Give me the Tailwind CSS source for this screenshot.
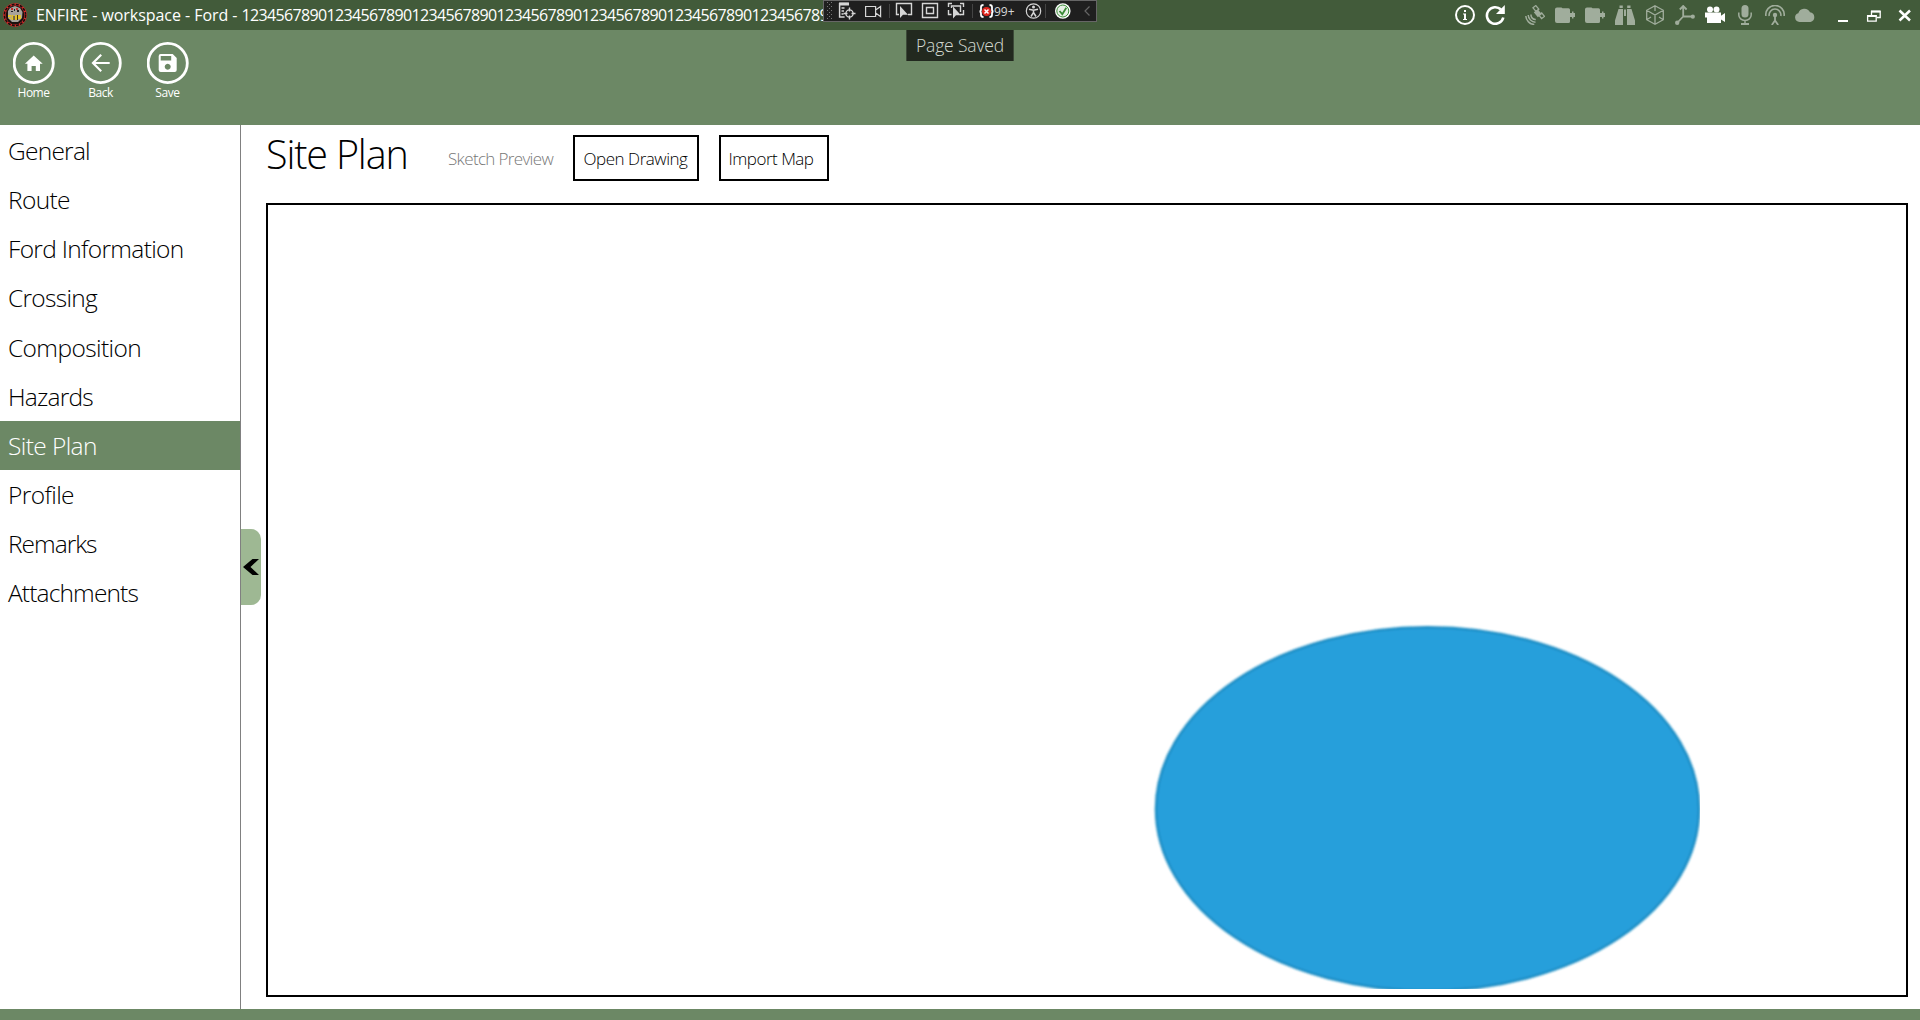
<!DOCTYPE html>
<html lang="en">
<head>
<meta charset="utf-8">
<title>ENFIRE</title>
<script src="https://cdn.jsdelivr.net/npm/@tailwindcss/browser@4"></script>
</head>
<body class="relative flex h-screen w-screen flex-col overflow-hidden bg-white font-['Open_Sans',sans-serif] font-light text-black">

<!-- Title bar -->
<header class="flex h-[30px] shrink-0 items-center bg-[#425b3a] text-white">
  <svg class="ml-[3px] size-6 shrink-0" viewBox="0 0 24 24">
    <circle cx="12" cy="12" r="11.8" fill="#e32a2a"/>
    <circle cx="12" cy="12" r="10.6" fill="none" stroke="#17100f" stroke-width="1.6" stroke-dasharray="3 1.2"/>
    <circle cx="12" cy="12" r="9.4" fill="#1b1210"/>
    <path d="M5 8l2-3 5-2 5 2 2.500 4-.5 6-4 4H9l-4-4z" fill="#a7a39b"/>
    <path d="M8 5h2v2H8zM13 5h2v2h-2z" fill="#c03030"/>
    <path d="M11 6h1v2h-1zM14 7h2v2h-2zM8 8h2v1H8z" fill="#222"/>
    <path d="M5 12h3v2H5zM8.500 12h2v5h-2zM12 12h2v5h-2zM15 12h3v4h-3zM6 15h2v1H6z" fill="#e3c32c"/>
    <path d="M10.500 13h1v4h-1zM14 12h1v5h-1z" fill="#40300c"/>
  </svg>
  <div class="ml-[9px] flex w-[788px] shrink-0 overflow-hidden text-base leading-[32px] font-normal whitespace-pre"><span class="tracking-[-0.05px]">ENFIRE - workspace - Ford - </span><span class="tracking-[-0.65px]">1234567890123456789012345678901234567890123456789012345678901234567890</span></div>
  <div class="ml-auto -mr-px flex shrink-0 items-center">
    <div class="flex *:mx-[5px] *:size-5">
      <svg viewBox="0 0 20 20"><circle cx="10" cy="10" r="9" fill="none" stroke="#fff" stroke-width="2"/><path d="M9 5h2v2H9zM8 8.500h3V14h1v1H8v-1h1V9.500H8z" fill="#fff"/></svg>
      <svg viewBox="0 0 20 20"><path d="M16 4.500A8.300 8.300 0 1 0 18.300 12.500" fill="none" stroke="#fff" stroke-width="2.600"/><path d="M19.800 0v9H11z" fill="#fff"/></svg>
    </div>
    <div class="ml-2.5 flex text-[#a0ad9c] *:mx-[5px] *:size-5">
      <svg viewBox="0 0 20 20" fill="none" stroke="currentColor"><path d="M8 2.800L10.800.6l3 3.600L11 6.400zM13.800 10l2.900-2.200 2.800 3.600-2.900 2.200z" stroke-width="1.300"/><path d="M12.800 4.300l4 5-4 3-4-5z" fill="currentColor" stroke="none"/><path d="M6 9.500a4.500 4.500 0 0 0 4.800 5M3.200 10a7.500 7.500 0 0 0 7.300 7.200M.8 11a9 9 0 0 0 8.500 8.500" stroke-width="1.500"/></svg>
      <svg viewBox="0 0 20 20" fill="currentColor"><path d="M2 2.500h4.500l1 .7H13.500q1.500 0 1.500 1.500V8h2V6.500h1.500V8H20v4h-1.500v1.500H17V12h-2v4.500q0 1.500-1.500 1.500H2Q0 18 0 16V4.200Q0 2.500 2 2.500z"/></svg>
      <svg viewBox="0 0 20 20" fill="currentColor"><path d="M2 2.500h4.500l1 .7H13.500q1.500 0 1.500 1.500V8h2V6.500h1.500V8H20v4h-1.500v1.500H17V12h-2v4.500q0 1.500-1.500 1.500H2Q0 18 0 16V4.200Q0 2.500 2 2.500z"/></svg>
      <svg viewBox="0 0 20 20" fill="currentColor"><path d="M4.500.5h3.300V3H4.500zM12.200.5h3.300V3h-3.300zM3.500 4H8v16H0v-4.500zM12 4h4.500L20 15.500V20h-8zM9 4.500h2V11H9z"/></svg>
      <svg viewBox="0 0 20 20" fill="none" stroke="currentColor" stroke-width="1.300"><path d="M10 .8l8.300 4.500v9.400L10 19.200 1.700 14.700V5.300zM10 .8V6M1.700 5.300L10 10l8.300-4.700M10 10v9M1.700 14.700L6 12M18.300 14.700L14 12"/></svg>
      <svg viewBox="0 0 20 20" fill="none" stroke="currentColor" stroke-width="1.800"><path d="M8.200 1v10.500H17M8.200 11.500L3 17M4.800 4.500L8.200 1l3.400 3.500"/><circle cx="17.800" cy="11.700" r="2.100" fill="currentColor" stroke="none"/><circle cx="2.200" cy="17.800" r="2.200" fill="currentColor" stroke="none"/></svg>
      <svg viewBox="0 0 20 20" fill="#fff"><circle cx="5" cy="4.500" r="3"/><circle cx="11.500" cy="4.500" r="3"/><path d="M0 7.500h16v3.200L20 8v9l-4-2.500V18H2v-5.500H0z"/></svg>
      <svg viewBox="0 0 20 20" fill="currentColor"><rect x="6.500" y="0" width="7" height="12.500" rx="3.500"/><path d="M3.800 7.500V10a6.200 5.500 0 0 0 12.400 0V7.500M10 15.500V19" fill="none" stroke="currentColor" stroke-width="1.500"/><path d="M6 18h8v2H6z"/></svg>
      <svg viewBox="0 0 20 20" fill="none" stroke="currentColor" stroke-width="1.600"><path d="M.9 11a9.200 9.200 0 1 1 18.200 0M4.200 11a5.900 5.900 0 1 1 11.600 0"/><path d="M10 10v5.500L6.800 20M10 15.500l3.200 4.500" stroke-width="1.800"/><circle cx="10" cy="10" r="2.200" fill="currentColor" stroke="none"/></svg>
      <svg viewBox="0 0 20 20" fill="currentColor"><path d="M4.500 17A4.500 4.500 0 0 1 3.300 8.200 6.300 6.300 0 0 1 15 7.200 5 5 0 0 1 15.500 17z"/></svg>
    </div>
    <div class="ml-2 flex *:size-[30px] *:mr-px">
      <svg viewBox="0 0 30 30"><path d="M10 20h10v2H10z" fill="#fff"/></svg>
      <svg viewBox="0 0 30 30" fill="none" stroke="#fff"><path d="M12.500 15v-3.500h8.700v6H18" stroke-width="1.300"/><path d="M12 11.600h9.500M8 16h9.500" stroke-width="2"/><path d="M8.600 15.700h8.600v5.500H8.600z" stroke-width="1.300"/></svg>
      <svg viewBox="0 0 30 30" fill="none" stroke="#fff"><path d="M9.500 10.500l10.500 10M20 10.500l-10.500 10" stroke-width="2.500"/></svg>
    </div>
  </div>
</header>

<!-- Command ribbon -->
<nav class="flex h-[95px] shrink-0 bg-[#6c8865] pt-3 text-xs font-normal text-white">
  <div class="flex w-[67px] flex-col items-center">
    <svg class="size-[42px]" viewBox="0 0 42 42"><circle cx="20.700" cy="21" r="19.600" fill="none" stroke="#fff" stroke-width="2.800"/><path d="M20.700 13.500l9 8.200H27V29h-4.200v-5h-4.200v5h-4.200v-7.300h-2.500z" fill="#fff"/></svg>
    <span class="leading-[18px] tracking-[-0.5px]">Home</span>
  </div>
  <div class="flex w-[67px] flex-col items-center">
    <svg class="size-[42px]" viewBox="0 0 42 42" fill="none" stroke="#fff"><circle cx="20.700" cy="21" r="19.600" stroke-width="2.800"/><path d="M29.700 21H13.200M21.200 12.800L13 21l8.200 8.200" stroke-width="2.200"/></svg>
    <span class="leading-[18px] tracking-[-0.5px]">Back</span>
  </div>
  <div class="flex w-[67px] flex-col items-center">
    <svg class="size-[42px]" viewBox="0 0 42 42"><circle cx="20.700" cy="21" r="19.600" fill="none" stroke="#fff" stroke-width="2.800"/><path fill-rule="evenodd" fill="#fff" d="M13.700 12h12l4 4v12q0 2-2 2h-14q-2 0-2-2V14q0-2 2-2zM13.700 14v4.500h10.500V14zM20.700 21.800a3 3 0 1 0 .01 0z"/></svg>
    <span class="leading-[18px] tracking-[-0.4px]">Save</span>
  </div>
</nav>

<main class="flex min-h-0 flex-1">
  <!-- Section list -->
  <ul class="flex w-[241px] shrink-0 flex-col border-r border-[#808080] pt-px text-[24.500px] leading-[50.5px] *:h-[49.17px] *:pl-2">
    <li class="tracking-[-0.75px]">General</li>
    <li class="tracking-[-0.65px]">Route</li>
    <li class="tracking-[-0.67px]">Ford Information</li>
    <li class="tracking-[-0.7px]">Crossing</li>
    <li class="tracking-[-0.6px]">Composition</li>
    <li class="tracking-[-0.8px]">Hazards</li>
    <li class="bg-[#6c8865] tracking-[-0.6px] text-white">Site Plan</li>
    <li class="tracking-[-0.6px]">Profile</li>
    <li class="tracking-[-1px]">Remarks</li>
    <li class="tracking-[-0.85px]">Attachments</li>
  </ul>

  <!-- Collapse handle -->
  <button class="mt-[404px] flex h-[75.5px] w-5 shrink-0 items-center justify-center self-start rounded-r-[10px] bg-[#9eb893]">
    <svg class="h-4 w-4" viewBox="0 0 16 16"><path d="M9.500 0H16L7.500 8l8.500 8H9.500L0 8z"/></svg>
  </button>

  <section class="ml-[5px] mr-3 flex flex-1 flex-col pb-3">
    <div class="flex h-[78px] shrink-0 items-start text-[17px]">
      <h1 class="w-[182px] text-[39.500px] leading-[59px] tracking-[-1.15px]">Site Plan</h1>
      <span class="mt-2.5 w-[125px] leading-[48px] tracking-[-0.65px] text-[#777]">Sketch Preview</span>
      <button class="mt-2.5 h-[46px] w-[126px] border-2 border-black pr-px leading-[44px] tracking-[-0.47px]">Open Drawing</button>
      <button class="mt-2.5 ml-5 h-[46px] w-[110px] border-2 border-black pr-1.5 leading-[44px] tracking-[-0.5px]">Import Map</button>
    </div>
    <!-- Sketch preview -->
    <div class="min-h-0 flex-1 border-2 border-black">
      <svg class="h-full w-full" viewBox="0 0 1638 790">
        <defs>
          <clipPath id="sheet"><rect x="0" y="0" width="1432" height="784"/></clipPath>
          <filter id="soft" x="-5%" y="-5%" width="110%" height="110%"><feGaussianBlur stdDeviation="1.1"/></filter>
        </defs>
        <g clip-path="url(#sheet)"><ellipse cx="1159.500" cy="604" rx="271.500" ry="181.800" fill="#259fdb" stroke="#1b8dc4" stroke-width="2.500" filter="url(#soft)"/></g>
      </svg>
    </div>
  </section>
</main>

<footer class="h-[11px] shrink-0 bg-[#6c8865]"></footer>

<!-- Docked debugging toolbar over the title bar -->
<div class="absolute top-0 left-[823px] flex h-[22px] w-[274px] items-center border border-[#666] bg-[#1f1f1f] text-[#d6d6d6]">
  <svg class="h-5 w-full" viewBox="824 1 272 20" fill="none" stroke="currentColor" stroke-width="1.200">
    <g stroke="#777" stroke-width="1" stroke-dasharray="1 3"><path d="M827.500 2v18M831.500 2v18"/><path d="M829.500 4v16"/></g>
    <path d="M839.500 3.500h9M839.600 3v14h5M841.500 8h3M841.500 11h2.500M841.500 14h2" stroke-width="1.500"/><path d="M839 4h10" stroke-width="3"/>
    <circle cx="849.500" cy="13.500" r="3.600" stroke-width="1.400"/><path d="M849.500 7.500v4M849.500 15.500v4M843.500 13.500h4M851.500 13.500h4" stroke-width="1.400"/>
    <path d="M865.600 6.500h10v10h-10zM875.600 10l5-3.500v10l-5-3.500"/>
    <path d="M889.500 4v14M972.500 4v14M1045.500 4v14" stroke="#444" stroke-width="1"/>
    <path d="M899 14.500h-2.500V3.500h15v11H908" stroke-width="1.400"/><path d="M900 6v12l3-3.200h5z" fill="currentColor" stroke="none"/>
    <path d="M922.500 3.500h15v14h-15zM926.500 7.500h7v6h-7z" stroke-width="1.400"/>
    <path d="M952 3.500h-3.500V7M960 3.500h3.500V7M948.500 10v4.500h3M963.500 10v4.500H960M951.500 8V6h9v6" stroke-width="1.400"/><path d="M953 6.500v12l3-3.200h5z" fill="currentColor" stroke="none"/>
    <path d="M983.500 5q-2.500 0-2.500 2v2.500q0 2-1.500 2 1.500 0 1.500 2V15q0 2 2.500 2M989.500 5q2.500 0 2.500 2v2.500q0 2 1.500 2-1.500 0-1.500 2V15q0 2-2.500 2" stroke="#fff" stroke-width="1.800"/>
    <circle cx="986.500" cy="11.500" r="4.500" fill="#e0251c" stroke="none"/><path d="M984.500 9.500l4 4M988.500 9.500l-4 4" stroke="#fff" stroke-width="1.500"/>
    <circle cx="1033.500" cy="11" r="7.200"/><circle cx="1033.500" cy="7" r="1.500" fill="currentColor" stroke="none"/><path d="M1029 9.300l4.500 1 4.500-1M1033.500 10v2.500l-2.500 4M1033.500 12.500l2.500 4" stroke-width="1.500"/>
    <circle cx="1062.800" cy="11" r="7.800" fill="#fff" stroke="none"/><circle cx="1062.800" cy="11" r="6" stroke="#388a34" stroke-width="1" fill="#e6f0e5"/><path d="M1059.500 11l2.800 3.200 4-6.500" stroke="#388a34" stroke-width="1.800"/>
    <path d="M1089.500 6.500l-4.500 4.500 4.500 4.500" stroke="#666"/>
  </svg>
  <span class="absolute top-[3px] left-[170px] text-xs leading-4 font-normal">99+</span>
</div>

<!-- Notification -->
<div class="absolute top-[30px] left-[906px] h-[31px] w-[108px] border-x border-[#3d4a39] bg-[#22291f] text-center text-[17.500px] leading-[30px] tracking-[-0.15px] text-[#d4dad2]">Page Saved</div>

</body>
</html>
